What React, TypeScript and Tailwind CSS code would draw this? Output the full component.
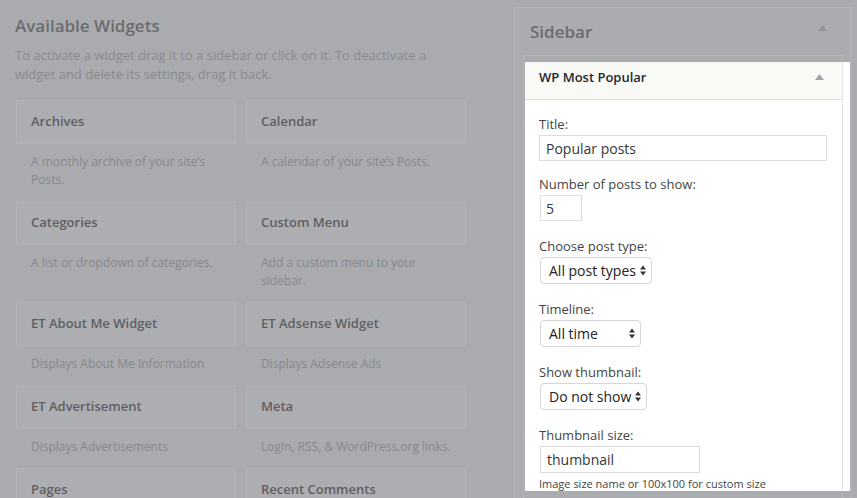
import React from "react";

const font = { fontFamily: "'Open Sans', 'Liberation Sans', sans-serif" };

type W = { title: string; desc: string };

const rows: [W, W][] = [
  [
    { title: "Archives", desc: "A monthly archive of your site’s Posts." },
    { title: "Calendar", desc: "A calendar of your site’s Posts." },
  ],
  [
    { title: "Categories", desc: "A list or dropdown of categories." },
    { title: "Custom Menu", desc: "Add a custom menu to your sidebar." },
  ],
  [
    { title: "ET About Me Widget", desc: "Displays About Me Information" },
    { title: "ET Adsense Widget", desc: "Displays Adsense Ads" },
  ],
  [
    { title: "ET Advertisement", desc: "Displays Advertisements" },
    { title: "Meta", desc: "Login, RSS, & WordPress.org links." },
  ],
  [
    { title: "Pages", desc: "" },
    { title: "Recent Comments", desc: "" },
  ],
];

function Triangle({ className }: { className: string }) {
  return (
    <svg width="9" height="6" viewBox="0 0 9 6" className={className}>
      <polygon points="4.5,0 9,6 0,6" fill="currentColor" />
    </svg>
  );
}

function UpDown() {
  return (
    <svg width="6" height="11" viewBox="0 0 6 11" className="text-[#333] shrink-0">
      <polygon points="3,0.5 6,4.5 0,4.5" fill="currentColor" />
      <polygon points="3,10.5 6,6.5 0,6.5" fill="currentColor" />
    </svg>
  );
}

function Select({ value, width }: { value: string; width: string }) {
  return (
    <div
      className={`${width} h-[27px] mt-[2px] ml-[1px] flex items-center justify-between pl-[8px] pr-[5px] border border-[#d6d6d6] rounded-[4px] bg-white text-[14px] text-[#222] leading-none whitespace-nowrap`}
    >
      <span>{value}</span>
      <UpDown />
    </div>
  );
}

function Label({ children, className = "" }: { children: React.ReactNode; className?: string }) {
  return <div className={`text-[13px] leading-[18px] text-[#444] ${className}`}>{children}</div>;
}

export default function App() {
  return (
    <div
      style={font}
      className="w-[857px] h-[498px] overflow-hidden bg-[#aaabae] flex"
    >
      {/* Left column */}
      <div className="w-[498px] shrink-0 pl-[15px] pt-[14px]">
        <h2 className="text-[17px] leading-[24px] font-semibold text-[#6b6c70]">
          Available Widgets
        </h2>
        <p className="mt-[8px] w-[440px] text-[13px] leading-[19px] text-[#898a8e]">
          To activate a widget drag it to a sidebar or click on it. To deactivate a widget and
          delete its settings, drag it back.
        </p>
        <div className="mt-[16px] ml-[1px] w-[450px] flex flex-col">
          {rows.map((row, i) => (
            <div key={i} className="grid grid-cols-2 gap-x-[10px]">
              {row.map((w) => (
                <div key={w.title} className="flex flex-col">
                  <div className="h-[44px] border border-[#b3b4b7] bg-[#adaeb1] flex items-center pl-[14px] text-[13px] font-semibold text-[#5e5f63]">
                    {w.title}
                  </div>
                  <div className="pt-[9px] pb-[12px] pl-[15px] pr-[6px] text-[12px] leading-[18px] text-[#87888c]">
                    {w.desc}
                  </div>
                </div>
              ))}
            </div>
          ))}
        </div>
      </div>

      {/* Right column */}
      <div className="pt-[7px] pl-[16px]">
        <div className="w-[338px] h-[520px] border border-[#b3b4b7] bg-[#abacaf]">
          <div className="h-[47px] flex items-center justify-between pl-[15px] pr-[24px]">
            <span className="text-[17px] font-semibold text-[#6b6c70]">Sidebar</span>
            <Triangle className="text-[#939497] -mt-[8px]" />
          </div>
          <div className="ml-[8px] w-[320px] h-[470px] border border-[#b5b6b9] pt-[6px]">
            <div className="ml-[1px] w-[325px] h-[429px] bg-white">
              <div className="w-[318px] h-full border-r border-[#e2e2e2]">
                <div className="h-[38px] bg-[#f9f9f6] border-b border-[#e2e2e2] flex items-start justify-between pl-[14px] pr-[18px] pt-[6px]">
                  <span className="text-[13px] leading-[18px] font-semibold text-[#23282d]">
                    WP Most Popular
                  </span>
                  <Triangle className="text-[#a0a5aa] mt-[6px]" />
                </div>
                <div className="pl-[14px] pt-[15px]">
                  <Label>Title:</Label>
                  <div className="mt-[2px] w-[288px] h-[26px] border border-[#dcdcdc] flex items-center pl-[6px] text-[14px] text-[#32373c]">
                    Popular posts
                  </div>

                  <Label className="mt-[14px]">Number of posts to show:</Label>
                  <div className="mt-[2px] ml-[1px] w-[42px] h-[26px] border border-[#dcdcdc] flex items-center pl-[5px] text-[14px] text-[#32373c]">
                    5
                  </div>

                  <Label className="mt-[16px]">Choose post type:</Label>
                  <Select value="All post types" width="w-[112px]" />

                  <Label className="mt-[16px]">Timeline:</Label>
                  <Select value="All time" width="w-[101px]" />

                  <Label className="mt-[16px]">Show thumbnail:</Label>
                  <Select value="Do not show" width="w-[107px]" />

                  <Label className="mt-[16px]">Thumbnail size:</Label>
                  <div className="mt-[2px] ml-[1px] w-[160px] h-[27px] border border-[#dcdcdc] flex items-center pl-[6px] text-[14px] text-[#32373c]">
                    thumbnail
                  </div>
                  <div className="mt-[4px] text-[11px] leading-[14px] text-[#444]">
                    Image size name or 100x100 for custom size
                  </div>
                </div>
              </div>
            </div>
          </div>
        </div>
      </div>
    </div>
  );
}
